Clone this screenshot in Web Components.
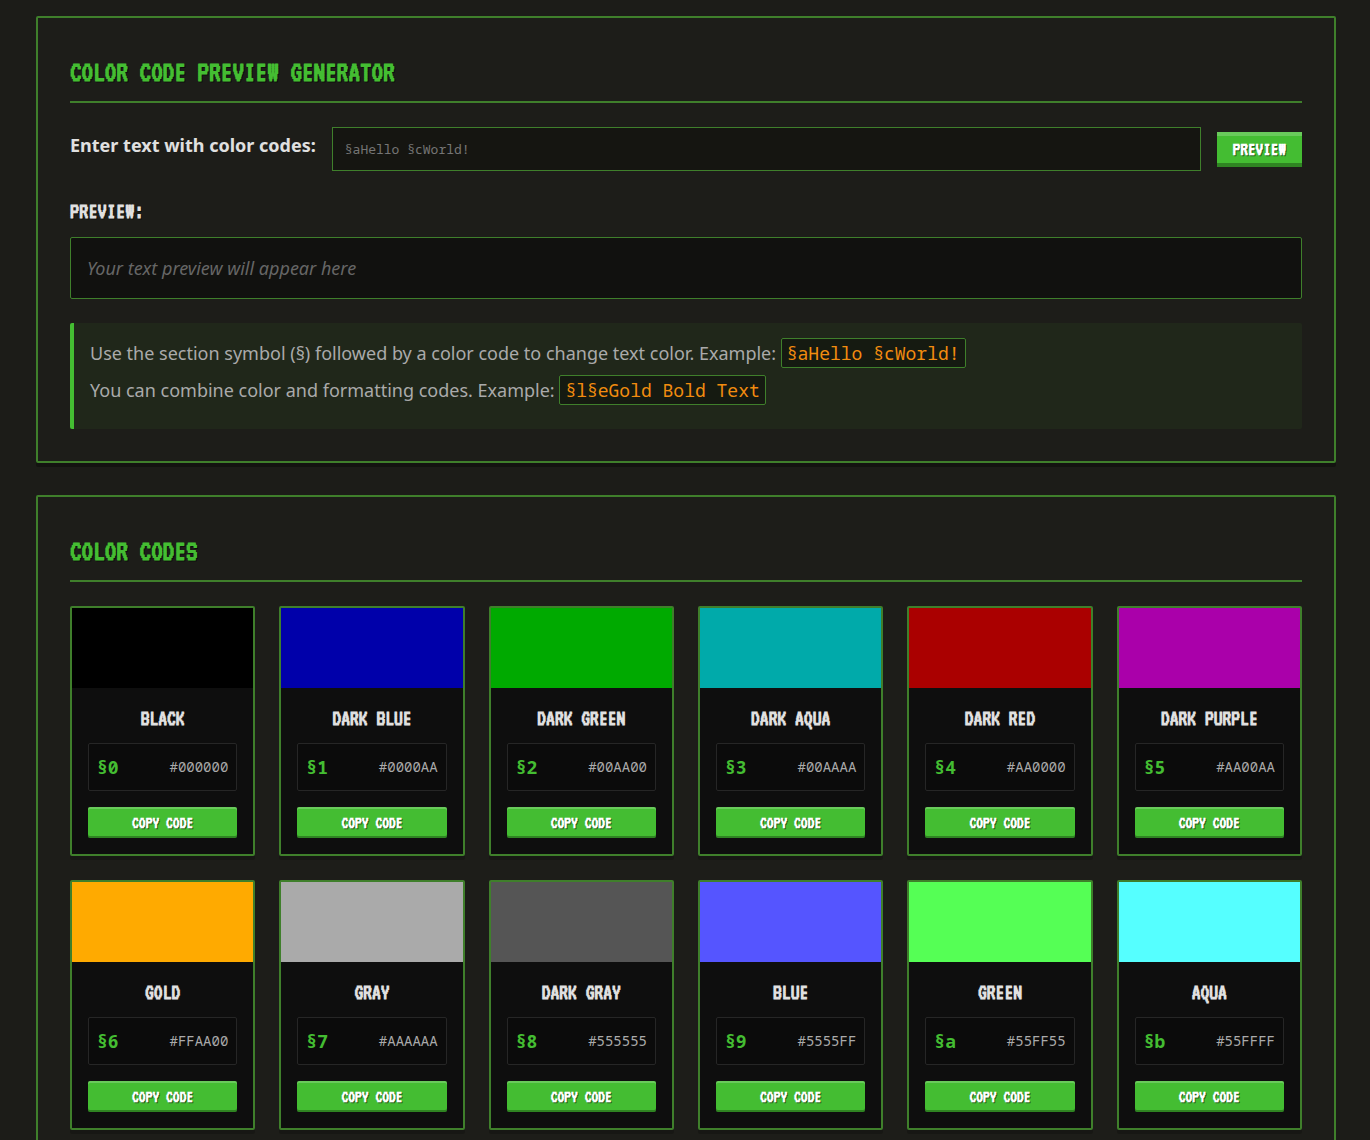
<!DOCTYPE html>
<html lang="en">
<head>
<meta charset="utf-8">
<meta name="viewport" content="width=device-width, initial-scale=1">
<title>Color Codes</title>
<style>
	:root {
		--green: #44bd32;
		--green-dark: #3f7f2b;
		--text: #e0e0e0;
		--text-muted: #aaa;
		--font-mono: "Noto Sans Mono", "DejaVu Sans Mono", monospace;
		--font-title: "VT323", "DejaVu Sans Mono", monospace;
	}

	body {
		margin: 0;
		padding: 16px 34px 32px 36px;
		background-color: #1c1c18;
		color: var(--text);
		font: 18px/29px "Noto Sans", sans-serif;
	}

	main {
		display: flex;
		flex-direction: column;
		gap: 32px;
	}
</style>
</head>
<body>

<main>
	<code-panel>
		<span slot="title">COLOR CODE PREVIEW GENERATOR</span>
		<preview-form></preview-form>
		<info-note>
			<p>Use the section symbol (§) followed by a color code to change text color. Example: <code-sample>§aHello §cWorld!</code-sample></p>
			<p>You can combine color and formatting codes. Example: <code-sample>§l§eGold Bold Text</code-sample></p>
		</info-note>
	</code-panel>

	<code-panel>
		<span slot="title">COLOR CODES</span>
		<card-grid>
			<color-card code="§0" hex="#000000">BLACK</color-card>
			<color-card code="§1" hex="#0000AA">DARK BLUE</color-card>
			<color-card code="§2" hex="#00AA00">DARK GREEN</color-card>
			<color-card code="§3" hex="#00AAAA">DARK AQUA</color-card>
			<color-card code="§4" hex="#AA0000">DARK RED</color-card>
			<color-card code="§5" hex="#AA00AA">DARK PURPLE</color-card>
			<color-card code="§6" hex="#FFAA00">GOLD</color-card>
			<color-card code="§7" hex="#AAAAAA">GRAY</color-card>
			<color-card code="§8" hex="#555555">DARK GRAY</color-card>
			<color-card code="§9" hex="#5555FF">BLUE</color-card>
			<color-card code="§a" hex="#55FF55">GREEN</color-card>
			<color-card code="§b" hex="#55FFFF">AQUA</color-card>
		</card-grid>
	</code-panel>
</main>

<script>
class CodePanel extends HTMLElement {
	constructor() {
		super();
		this.attachShadow({mode: 'open'});
		this.shadowRoot.innerHTML = `
			<style>
			:host {
				display: block;
				padding: 32px;
				border: 2px solid var(--green-dark);
				border-radius: 2px;
				background-color: #1d1d19;
				box-shadow: 0 4px 0 rgba(0, 0, 0, 0.3);
			}

			h2 {
				margin: 0 0 24px;
				padding-bottom: 6px;
				border-bottom: 2px solid var(--green-dark);
				color: var(--green);
				font: bold 29px/45px var(--font-title);
				text-shadow: 1px 1px 0 rgba(0, 0, 0, 0.5);
			}
			</style>

			<h2><slot name="title"></slot></h2>
			<slot></slot>
		`;
	}
}

class GameButton extends HTMLElement {
	constructor() {
		super();
		this.attachShadow({mode: 'open'});
		this.shadowRoot.innerHTML = `
			<style>
			:host {
				display: block;
			}

			button {
				display: block;
				width: 100%;
				padding: 8px 16px;
				border: none;
				background-color: var(--green);
				box-shadow: inset 0 4px 0 rgba(255, 255, 255, 0.2), inset 0 -4px 0 rgba(0, 0, 0, 0.3);
				color: #fff;
				font: bold 19px/19px var(--font-title);
				text-shadow: 1px 1px 0 rgba(0, 0, 0, 0.5);
				cursor: pointer;
			}

			:host([small]) button {
				padding: 8px;
				border-radius: 2px;
				box-shadow: inset 0 2px 0 rgba(255, 255, 255, 0.2), inset 0 -2px 0 rgba(0, 0, 0, 0.3);
				font-size: 17px;
				line-height: 15px;
			}
			</style>

			<button type="button"><slot></slot></button>
		`;
	}
}

class PreviewForm extends HTMLElement {
	constructor() {
		super();
		this.attachShadow({mode: 'open'});
		this.shadowRoot.innerHTML = `
			<style>
			:host {
				display: block;
				margin-bottom: 24px;
			}

			.row {
				display: flex;
				align-items: center;
				gap: 16px;
				margin-bottom: 24px;
			}

			label {
				margin-bottom: 8px;
				font-weight: bold;
			}

			input {
				flex: 1;
				min-width: 0;
				box-sizing: border-box;
				height: 44px;
				padding: 0 12px;
				border: 1px solid var(--green-dark);
				border-radius: 0;
				background-color: #151511;
				color: var(--text);
				font: 13px var(--font-mono);
			}

			input::placeholder {
				color: #757575;
			}

			h3 {
				margin: 0 0 8px;
				font: bold 23px/34px var(--font-title);
				text-shadow: 1px 1px 0 rgba(0, 0, 0, 0.5);
			}

			.output {
				padding: 16px;
				min-height: 28px;
				border: 1px solid var(--green-dark);
				border-radius: 2px;
				background-color: #11110f;
				line-height: 28px;
			}

			.empty {
				color: #666;
				font-style: italic;
			}
			</style>

			<div class="row">
				<label for="source">Enter text with color codes:</label>
				<input id="source" type="text" placeholder="§aHello §cWorld!">
				<game-button>PREVIEW</game-button>
			</div>
			<h3>PREVIEW:</h3>
			<div class="output"><span class="empty">Your text preview will appear here</span></div>
		`;
	}

	connectedCallback() {
		this.inputEl = this.shadowRoot.querySelector('input');
		this.outputEl = this.shadowRoot.querySelector('.output');
		this.shadowRoot.querySelector('game-button').addEventListener('click', this.renderPreview.bind(this));
	}

	renderPreview() {
		if (!this.inputEl.value) return;
		this.outputEl.textContent = '';
		let color = '';
		let bold = false;
		this.inputEl.value.split(/(§.)/).forEach(part => {
			if (part.startsWith('§')) {
				const card = document.querySelector(`color-card[code="${CSS.escape(part)}"]`);
				if (card) color = card.getAttribute('hex');
				if (part === '§l') bold = true;
				return;
			}
			const span = document.createElement('span');
			span.textContent = part;
			span.style.color = color;
			span.style.fontWeight = bold ? 'bold' : '';
			this.outputEl.append(span);
		});
	}
}

class InfoNote extends HTMLElement {
	constructor() {
		super();
		this.attachShadow({mode: 'open'});
		this.shadowRoot.innerHTML = `
			<style>
			:host {
				display: flex;
				flex-direction: column;
				gap: 8px;
				padding: 16px 16px 24px;
				border-left: 4px solid var(--green);
				border-radius: 2px;
				background-color: #20271a;
				color: var(--text-muted);
			}

			::slotted(p) {
				margin: 0;
			}
			</style>

			<slot></slot>
		`;
	}
}

class CodeSample extends HTMLElement {
	constructor() {
		super();
		this.attachShadow({mode: 'open'});
		this.shadowRoot.innerHTML = `
			<style>
			code {
				padding: 2px 5px;
				border: 1px solid var(--green-dark);
				border-radius: 2px;
				background-color: #151a11;
				color: #f28c0f;
				font-family: var(--font-mono);
				font-size: 18px;
			}
			</style>

			<code><slot></slot></code>
		`;
	}
}

class CardGrid extends HTMLElement {
	constructor() {
		super();
		this.attachShadow({mode: 'open'});
		this.shadowRoot.innerHTML = `
			<style>
			:host {
				display: grid;
				grid-template-columns: repeat(auto-fill, minmax(180px, 1fr));
				gap: 24px;
			}
			</style>

			<slot></slot>
		`;
	}
}

class ColorCard extends HTMLElement {
	constructor() {
		super();
		this.attachShadow({mode: 'open'});
		this.shadowRoot.innerHTML = `
			<style>
			:host {
				display: block;
				border: 2px solid var(--green-dark);
				border-radius: 2px;
				background-color: #0e0e0e;
				box-shadow: 0 4px 0 rgba(0, 0, 0, 0.2);
			}

			.swatch {
				height: 80px;
			}

			.body {
				padding: 16px;
			}

			h3 {
				margin: 0 0 10px;
				font: bold 22px/29px var(--font-title);
				text-align: center;
			}

			.codes {
				display: flex;
				align-items: center;
				justify-content: space-between;
				margin-bottom: 16px;
				padding: 8px;
				border: 1px solid #262626;
				border-radius: 2px;
				background-color: #0b0b0b;
				font-family: var(--font-mono);
				line-height: 30px;
			}

			.code {
				color: var(--green);
				font-weight: bold;
			}

			.hex {
				color: var(--text-muted);
				font-size: 14px;
			}
			</style>

			<div class="swatch"></div>
			<div class="body">
				<h3><slot></slot></h3>
				<div class="codes">
					<span class="code"></span>
					<span class="hex"></span>
				</div>
				<game-button small>COPY CODE</game-button>
			</div>
		`;
	}

	connectedCallback() {
		this.shadowRoot.querySelector('.swatch').style.backgroundColor = this.getAttribute('hex');
		this.shadowRoot.querySelector('.code').textContent = this.getAttribute('code');
		this.shadowRoot.querySelector('.hex').textContent = this.getAttribute('hex');
		this.shadowRoot.querySelector('game-button').addEventListener('click', this.copyCode.bind(this));
	}

	copyCode() {
		if (navigator.clipboard) navigator.clipboard.writeText(this.getAttribute('code'));
	}
}

customElements.define('game-button', GameButton);
customElements.define('code-sample', CodeSample);
customElements.define('code-panel', CodePanel);
customElements.define('preview-form', PreviewForm);
customElements.define('info-note', InfoNote);
customElements.define('card-grid', CardGrid);
customElements.define('color-card', ColorCard);
</script>
</body>
</html>
